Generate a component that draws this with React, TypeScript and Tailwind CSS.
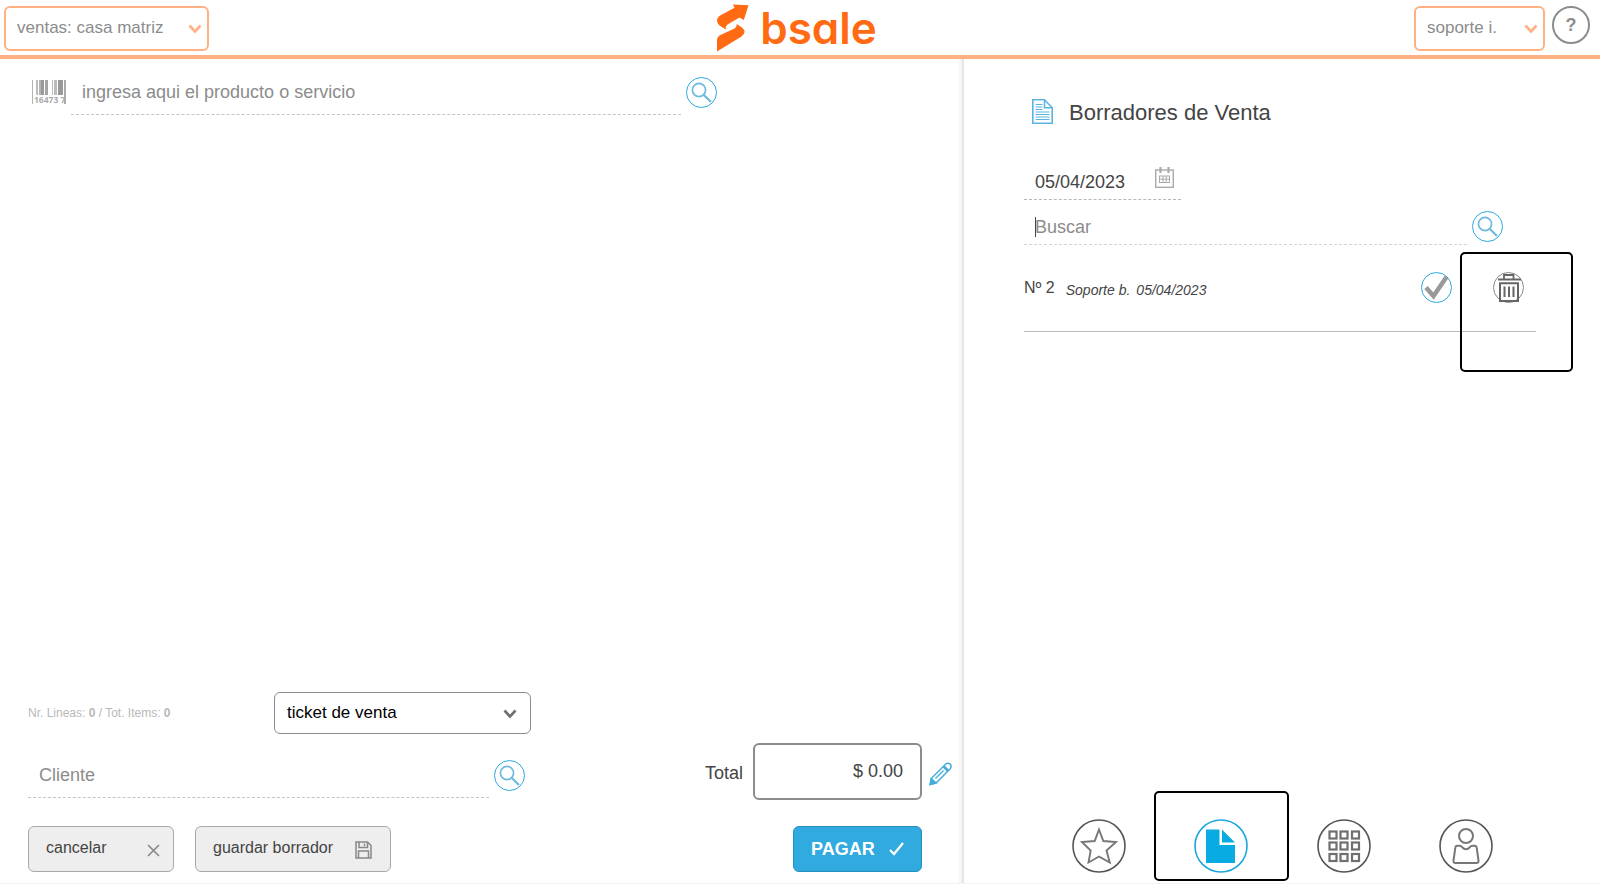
import React, { useState } from 'react';

const SearchIcon = () => (
    <svg width="31" height="31" viewBox="0 0 31 31" fill="none">
        <circle cx="15.5" cy="15.5" r="15" stroke="#2ea9dc" />
        <circle cx="13" cy="13" r="6.6" stroke="#6db9e0" strokeWidth="1.7" />
        <path d="M17.6 17.8 L25 25" stroke="#6db9e0" strokeWidth="2.2" />
    </svg>
);

const SearchButton = ({ label }: { label: string }) => (
    <button type="button" aria-label={label} className="shrink-0 cursor-pointer">
        <SearchIcon />
    </button>
);

const Chevron = ({ className }: { className: string }) => (
    <svg width="14" height="10" viewBox="0 0 14 10" fill="none" className={className}>
        <path d="M1.5 1.5 L7 7.5 L12.5 1.5" stroke="currentColor" strokeWidth="2.6" />
    </svg>
);

const Logo = () => (
    <a href="#" className="flex items-center gap-[11px] text-[#ff6a13]">
        <svg width="32" height="48" viewBox="0 0 32 48" fill="currentColor">
            <path d="M16 0.5 L31.5 1.2 L26.8 16 L22.5 13.5 L10.500 20.500 Q8.500 22 8.800 25.500 L2.500 21.500 Q0 19.500 0 16.500 Q0 13.500 3.500 11.200 L17.500 3.800 Z" />
            <path d="M19.800 20 L25 23.500 Q27.500 25.500 27.500 28 Q27.300 30.500 24.500 32.500 L0 47.500 V36 Q0 33 3.500 31 L17.500 24.500 Q19.800 23 19.800 20 Z" />
        </svg>
        <span className="font-['Inter',sans-serif] text-[44px] leading-[48px] font-semibold [font-feature-settings:'cv11']">
            bsale
        </span>
    </a>
);

const Header = () => (
    <header className="flex h-[59px] items-center justify-between border-b-4 border-[#ffb184] pr-[10px] pl-1">
        <div className="flex flex-1 pt-px">
            <div className="relative w-[205px]">
                <select
                    aria-label="Sucursal"
                    className="h-[45px] w-full appearance-none rounded-md border-2 border-[#ffb184] bg-white pl-[11px] text-[17px] text-[#8c8c8c]"
                >
                    <option>ventas: casa matriz</option>
                </select>
                <Chevron className="pointer-events-none absolute top-[18px] right-[7px] text-[#ffb184]" />
            </div>
        </div>
        <Logo />
        <div className="flex flex-1 items-center justify-end gap-[7px] pt-px">
            <div className="relative w-[131px]">
                <select
                    aria-label="Usuario"
                    className="h-[45px] w-full appearance-none rounded-md border-2 border-[#ffb184] bg-white pl-[11px] text-[17px] text-[#8c8c8c]"
                >
                    <option>soporte i.</option>
                </select>
                <Chevron className="pointer-events-none absolute top-[18px] right-[7px] text-[#ffb184]" />
            </div>
            <button
                type="button"
                className="mb-[7px] h-[38px] w-[38px] rounded-full border-2 border-[#8c8c8c] text-[18px] leading-none font-bold text-[#8c8c8c]"
            >
                ?
            </button>
        </div>
    </header>
);

// [x, ancho, color] de cada barra
const bars: [number, number, string][] = [
    [4, 2, '#bbb'],
    [7, 2, '#b4b4b4'],
    [9, 3, '#999'],
    [13, 3, '#a4a4a4'],
    [20, 1, '#bbb'],
    [22, 3, '#bbb'],
    [26, 5, '#999'],
];

const Barcode = () => (
    <svg width="35" height="25" viewBox="0 0 35 25">
        <rect x="0" y="0" width="1" height="24" fill="#b4b4b4" />
        {bars.map(([x, w, color]) => (
            <rect key={x} x={x} y="0" width={w} height="15" fill={color} />
        ))}
        <rect x="32" y="0" width="2" height="24" fill="#aaa" />
        <text x="2" y="23" fontSize="8.5" fontWeight="bold" fill="#aaa" fontFamily="Open Sans, sans-serif">
            16473 7
        </text>
    </svg>
);

const SalePanel = () => {
    const [product, setProduct] = useState('');
    const [client, setClient] = useState('');

    return (
        <main className="flex flex-col justify-between border-r-2 border-[#e4e6e8] pt-[11px] pb-[11px] shadow-[inset_-3px_0_2px_#f4f5f6]">
            <div className="flex items-center pr-[245px] pl-8">
                <Barcode />
                <input
                    type="text"
                    aria-label="Producto o servicio"
                    placeholder="ingresa aqui el producto o servicio"
                    value={product}
                    onChange={(e) => setProduct(e.target.value)}
                    className="mr-[5px] ml-1 h-[45px] min-w-0 flex-1 border-b border-dashed border-[#c4c4c4] px-[11px] text-[18px] outline-none placeholder:text-[#8c8c8c]"
                />
                <SearchButton label="Buscar producto" />
            </div>

            <div className="flex items-end justify-between pr-[10px] pl-7">
                <div className="w-[503px]">
                    <div className="flex items-center justify-between">
                        <p className="text-[12px] text-[#b8b8b8]">
                            Nr. Lineas: <b>0</b> / Tot. Items: <b>0</b>
                        </p>
                        <div className="relative w-[257px]">
                            <select
                                aria-label="Tipo de documento"
                                className="block h-[42px] w-full appearance-none rounded-md border border-[#8c8c8c] bg-white pl-3 text-[17px] text-black"
                            >
                                <option>ticket de venta</option>
                            </select>
                            <Chevron className="pointer-events-none absolute top-[17px] right-[14px] text-[#6f6f6f]" />
                        </div>
                    </div>
                    <div className="mt-[19px] flex items-center pr-[6px]">
                        <input
                            type="text"
                            aria-label="Cliente"
                            placeholder="Cliente"
                            value={client}
                            onChange={(e) => setClient(e.target.value)}
                            className="mr-[5px] h-[45px] min-w-0 flex-1 border-b border-dashed border-[#c4c4c4] px-[11px] text-[18px] outline-none placeholder:text-[#8c8c8c]"
                        />
                        <SearchButton label="Buscar cliente" />
                    </div>
                    <div className="mt-7 flex gap-[21px]">
                        <button
                            type="button"
                            className="flex h-[46px] w-[146px] items-center justify-between rounded-md border border-[#a9a9a9] bg-[#eee] pr-[13px] pb-[2px] pl-[17px] text-[16px] text-[#444]"
                        >
                            cancelar
                            <svg width="13" height="13" viewBox="0 0 13 13" className="mt-1">
                                <path d="M1 1 L12 12 M12 1 L1 12" stroke="#888" strokeWidth="1.6" />
                            </svg>
                        </button>
                        <button
                            type="button"
                            className="flex h-[46px] w-[196px] items-center justify-between rounded-md border border-[#a9a9a9] bg-[#eee] pr-[18px] pb-[2px] pl-[17px] text-[16px] text-[#444]"
                        >
                            guardar borrador
                            <svg width="17" height="18" viewBox="0 0 17 18" fill="none" stroke="#888" strokeWidth="1.5" className="mt-1">
                                <path d="M1 1 H12.500 L16 4.500 V17 H1 Z" />
                                <path d="M4 1 V6.500 H12.500 V1 M9.500 2.500 V5" />
                                <path d="M3.500 17 V10 H13.500 V17" />
                            </svg>
                        </button>
                    </div>
                </div>

                <div className="flex flex-col">
                    <div className="flex items-center">
                        <label htmlFor="total" className="mt-1 mr-[10px] text-[18px] text-[#444]">
                            Total
                        </label>
                        <input
                            id="total"
                            type="text"
                            readOnly
                            value="$ 0.00"
                            className="h-[57px] w-[169px] rounded-md border-2 border-[#8c8c8c] pr-[17px] text-right text-[18px] text-[#444] outline-none"
                        />
                        <button type="button" aria-label="Editar total" className="mt-1 ml-[7px]">
                            <svg width="23" height="24" viewBox="0 0 23 24" fill="none" stroke="#45addb" strokeWidth="1.5">
                                <path d="M1.200 22.500 L2.200 16.500 L16.500 2.200 Q19 0.300 21.300 2.200 Q23 4.700 21 7 L7 21 Z" />
                                <path d="M14.500 4.200 L19.200 9" strokeWidth="2.800" />
                                <path d="M6.500 16.500 L14.500 8.500" strokeWidth="1.2" />
                                <path d="M1.200 22.500 L2.200 16.800 L7 21 Z" fill="#45addb" />
                                <circle cx="18.800" cy="4.200" r="1.2" fill="white" stroke="none" />
                            </svg>
                        </button>
                    </div>
                    <button
                        type="button"
                        className="mt-[26px] mr-[30px] flex h-[46px] w-[129px] items-center justify-between self-end rounded-md border border-[#2391c0] bg-[#30aadf] pr-[17px] pl-[17px] text-[18px] font-bold text-white"
                    >
                        PAGAR
                        <svg width="15" height="14" viewBox="0 0 15 14" fill="none">
                            <path d="M1 8 L5 12 L14 1" stroke="white" strokeWidth="2.200" />
                        </svg>
                    </button>
                </div>
            </div>
        </main>
    );
};

const DraftsPanel = () => {
    const [date, setDate] = useState('05/04/2023');
    const [search, setSearch] = useState('');

    return (
        <aside className="flex flex-col pb-[10px]">
            <div className="pt-[37px] pr-16 pl-[60px]">
                <div className="flex h-8 items-center gap-4 pl-2">
                    <svg width="21" height="25" viewBox="0 0 21 25" fill="none" stroke="#5ab6e0" strokeWidth="1.6" className="mb-[1px]">
                        <path d="M0.800 0.800 H12.500 L20.200 8.800 V24.200 H0.800 Z" />
                        <path d="M12.500 0.800 V8.800 H20.200" />
                        <path d="M3.500 5.500 H10.500 M3.500 8 H10.500 M3.500 10.500 H10.500 M3.500 13 H17.500 M3.500 15.500 H17.500 M3.500 18 H17.500 M3.500 20.500 H17.500" strokeWidth="1.2" />
                    </svg>
                    <h2 className="text-[22px] text-[#444]">Borradores de Venta</h2>
                </div>

                <div className="mt-[38px] flex h-[34px] w-[157px] items-center border-b border-dashed border-[#b8b8b8] pr-[7px] pl-[11px]">
                    <input
                        type="text"
                        aria-label="Fecha"
                        value={date}
                        onChange={(e) => setDate(e.target.value)}
                        className="min-w-0 flex-1 text-[18px] text-[#444] outline-none"
                    />
                    <svg width="19" height="21" viewBox="0 0 19 21" fill="none" stroke="#aaa" className="mb-[11px]">
                        <rect x="0.700" y="3" width="17.600" height="17.300" strokeWidth="1.400" />
                        <path d="M5.500 0 V6 M13.500 0 V6" strokeWidth="2.200" />
                        <rect x="4.500" y="9" width="10" height="6.500" />
                        <path d="M4.500 12.200 H14.500 M8 9 V15.500 M11.200 9 V15.500" />
                    </svg>
                </div>

                <div className="mt-[11px] flex items-start pr-[33px]">
                    <div className="relative mr-[5px] flex-1">
                        <input
                            type="text"
                            aria-label="Buscar borrador"
                            placeholder="Buscar"
                            value={search}
                            onChange={(e) => setSearch(e.target.value)}
                            className="block h-[34px] w-full border-b border-dashed border-[#d4d4d4] px-[11px] text-[18px] outline-none placeholder:text-[#8c8c8c]"
                        />
                        <span className="absolute top-[6px] left-[11px] h-5 w-px bg-[#444]" />
                    </div>
                    <SearchButton label="Buscar" />
                </div>

                <div className="flex items-center border-b border-[#bcbcbc] pt-[27px] pr-3 pb-7">
                    <span className="text-[16px] text-[#444]">Nº 2</span>
                    <span className="mt-[6px] ml-[11px] flex gap-[6px] text-[14px] text-[#444] italic">
                        <span>Soporte b.</span>
                        <span>05/04/2023</span>
                    </span>
                    <button type="button" aria-label="Usar borrador" className="ml-auto">
                        <svg width="31" height="31" viewBox="0 0 31 31" fill="none">
                            <circle cx="15.5" cy="15.5" r="15" stroke="#2ea9dc" />
                            <path d="M5 15.500 L12.500 24 L25.500 5" stroke="#999" strokeWidth="4.500" />
                        </svg>
                    </button>
                    <div className="relative ml-[41px] h-[31px]">
                        <button type="button" aria-label="Eliminar borrador">
                            <svg width="31" height="31" viewBox="0 0 31 31" fill="none" stroke="#666">
                                <circle cx="15.5" cy="15.5" r="15" stroke="#888" />
                                <path d="M5 7.500 H28" strokeWidth="2" />
                                <path d="M11 7 V3 H20.500 V7" strokeWidth="1.800" />
                                <path d="M7 11.200 H25 V29 H7 Z" strokeWidth="2" />
                                <path d="M11.500 14.500 V25 M16 14.500 V25 M20.500 14.500 V25" strokeWidth="2" />
                            </svg>
                        </button>
                        <div className="pointer-events-none absolute -top-5 -left-[33px] h-[120px] w-[113px] rounded-[5px] border-2 border-black" />
                    </div>
                </div>
            </div>

            <nav className="mt-auto flex justify-between pr-[107px] pl-[108px]">
                <button type="button" aria-label="Favoritos">
                    <svg width="54" height="54" viewBox="0 0 54 54" fill="none">
                        <circle cx="27" cy="27" r="26" stroke="#555" strokeWidth="1.600" />
                        <path
                            d="M27 10.500 L31.300 22 L44 23 L34.500 31.500 L37.800 43.500 L27 37.500 L16.500 43.500 L18.700 31.500 L10 23 L22.700 22 Z"
                            stroke="#777"
                            strokeWidth="1.900"
                        />
                    </svg>
                </button>
                <div className="relative h-[54px]">
                    <button type="button" aria-label="Borradores">
                        <svg width="54" height="54" viewBox="0 0 54 54" fill="none">
                            <circle cx="27" cy="27" r="26" stroke="#1ba7dd" strokeWidth="1.600" />
                            <path d="M12 10.500 H25.500 V26 H41 V44 H12 Z M28 10.500 L41 23.500 H28 Z" fill="#08ace2" />
                        </svg>
                    </button>
                    <div className="pointer-events-none absolute -top-7 -left-10 h-[90px] w-[135px] rounded-[5px] border-2 border-black" />
                </div>
                <button type="button" aria-label="Categorías">
                    <svg width="54" height="54" viewBox="0 0 54 54" fill="none">
                        <circle cx="27" cy="27" r="26" stroke="#555" strokeWidth="1.600" />
                        {[12.5, 23.5, 35].map((y) =>
                            [12.5, 23.5, 35].map((x) => (
                                <rect key={`${x}-${y}`} x={x} y={y} width="7" height="7" stroke="#6f6f6f" strokeWidth="2.2" />
                            ))
                        )}
                    </svg>
                </button>
                <button type="button" aria-label="Clientes">
                    <svg width="54" height="54" viewBox="0 0 54 54" fill="none">
                        <circle cx="27" cy="27" r="26" stroke="#555" strokeWidth="1.600" />
                        <g stroke="#777" strokeWidth="2">
                            <circle cx="27" cy="17" r="7" />
                            <path d="M18.500 26.700 H20.500 Q22 26.700 23 28 Q27 32.500 31 28 Q32 26.700 33.500 26.700 H35.500 Q37.500 26.700 37.700 28.700 L39.500 41.500 Q39.700 44 37.500 44 H16.500 Q14.300 44 14.500 41.500 L16.300 28.700 Q16.500 26.700 18.500 26.700 Z" />
                        </g>
                    </svg>
                </button>
            </nav>
        </aside>
    );
};

const App = () => {
    return (
        <div className="flex min-h-screen flex-col border-b border-[#f4f4f4] bg-white font-['Liberation_Sans',Arial,sans-serif]">
            <Header />
            <div className="grid flex-1 grid-cols-[241fr_159fr]">
                <SalePanel />
                <DraftsPanel />
            </div>
        </div>
    );
};

export default App;
